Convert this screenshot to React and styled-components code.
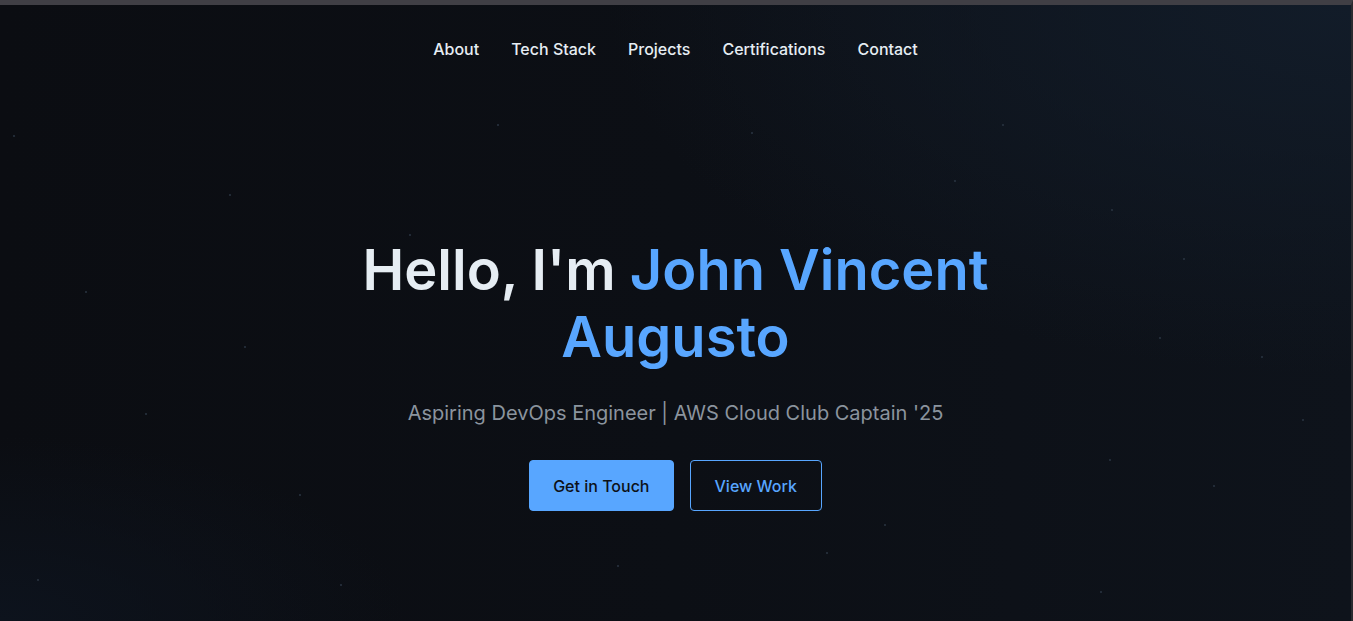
import React from 'react';
import styled, { createGlobalStyle } from 'styled-components';

const GlobalStyle = createGlobalStyle`
    html, body {
        margin: 0;
        padding: 0;
        background: #0b0d12;
        font-family: 'Inter', 'Noto Sans', sans-serif;
        -webkit-font-smoothing: antialiased;
    }
    * { box-sizing: border-box; }
`

const Page = styled.div`
    position: relative;
    height: 621px;
    overflow: hidden;
    display: flex;
    flex-direction: column;
    border-top: 5px solid #403f45;
    border-right: 2px solid #2a2a2f;
    background:
        radial-gradient(ellipse 55% 60% at 100% 0%, #121c29 0%, rgba(18,28,41,0) 100%),
        radial-gradient(ellipse 30% 30% at 0% 100%, #0d131d 0%, rgba(13,19,29,0) 100%),
        linear-gradient(90deg, #0b0d12 0%, #0c0f15 50%, #0e131b 100%);
`

const Stars = styled.svg`
    position: absolute;
    inset: 0;
    width: 100%;
    height: 100%;
    pointer-events: none;
`

const Nav = styled.nav`
    position: relative;
    display: flex;
    justify-content: center;
    gap: 32px;
    padding: 34px 0 0;
    height: 68px;
`

const NavLink = styled.a`
    color: #e6edf3;
    font-size: 16px;
    font-weight: 500;
    line-height: 20px;
    text-decoration: none;
`

const Hero = styled.section`
    position: relative;
    flex: 1;
    display: flex;
    flex-direction: column;
    align-items: center;
    padding-top: 164px;
    text-align: center;
`

const Title = styled.h1`
    margin: 0 0 28px;
    font-size: 56px;
    font-weight: 600;
    line-height: 1.2;
    color: #e6edf3;
    max-width: 680px;
`

const Accent = styled.span`
    color: #58a6ff;
`

const Subtitle = styled.p`
    margin: 0 0 33px;
    font-size: 20px;
    line-height: 28px;
    color: #8b949e;
`

const Actions = styled.div`
    display: flex;
    gap: 16px;
`

const Button = styled.a`
    display: inline-flex;
    align-items: center;
    justify-content: center;
    height: 51px;
    padding: 0 ${p => p.$primary ? '23px' : '24px'};
    border-radius: 4px;
    font-size: 16px;
    font-weight: 500;
    text-decoration: none;
    border: 1px solid #58a6ff;
    background: ${p => p.$primary ? '#58a6ff' : 'transparent'};
    color: ${p => p.$primary ? '#0d1117' : '#58a6ff'};
`

const starDots = [
    [14, 131], [86, 287], [146, 409], [245, 342], [300, 490], [410, 230],
    [752, 128], [1112, 205], [1184, 254], [1262, 352], [1303, 415], [1214, 481],
    [827, 548], [1101, 587], [341, 580], [1110, 455], [618, 561], [1003, 120],
    [955, 176], [1160, 333], [38, 575], [498, 120], [230, 190], [885, 520]
];

const App = () => {
    const links = ['About', 'Tech Stack', 'Projects', 'Certifications', 'Contact'];

    return (
        <>
            <GlobalStyle />
            <Page>
                <Stars>
                    {starDots.map(([x, y], i) => (
                        <circle key={i} cx={x} cy={y} r="1" fill="#2a3442" />
                    ))}
                </Stars>

                <Nav>
                    {links.map(l => (
                        <NavLink key={l} href={'#' + l.toLowerCase()}>{l}</NavLink>
                    ))}
                </Nav>

                <Hero>
                    <Title>
                        Hello, I'm <Accent>John Vincent Augusto</Accent>
                    </Title>
                    <Subtitle>Aspiring DevOps Engineer | AWS Cloud Club Captain '25</Subtitle>
                    <Actions>
                        <Button $primary href="#contact">Get in Touch</Button>
                        <Button href="#projects">View Work</Button>
                    </Actions>
                </Hero>
            </Page>
        </>
    );
}

export default App;
